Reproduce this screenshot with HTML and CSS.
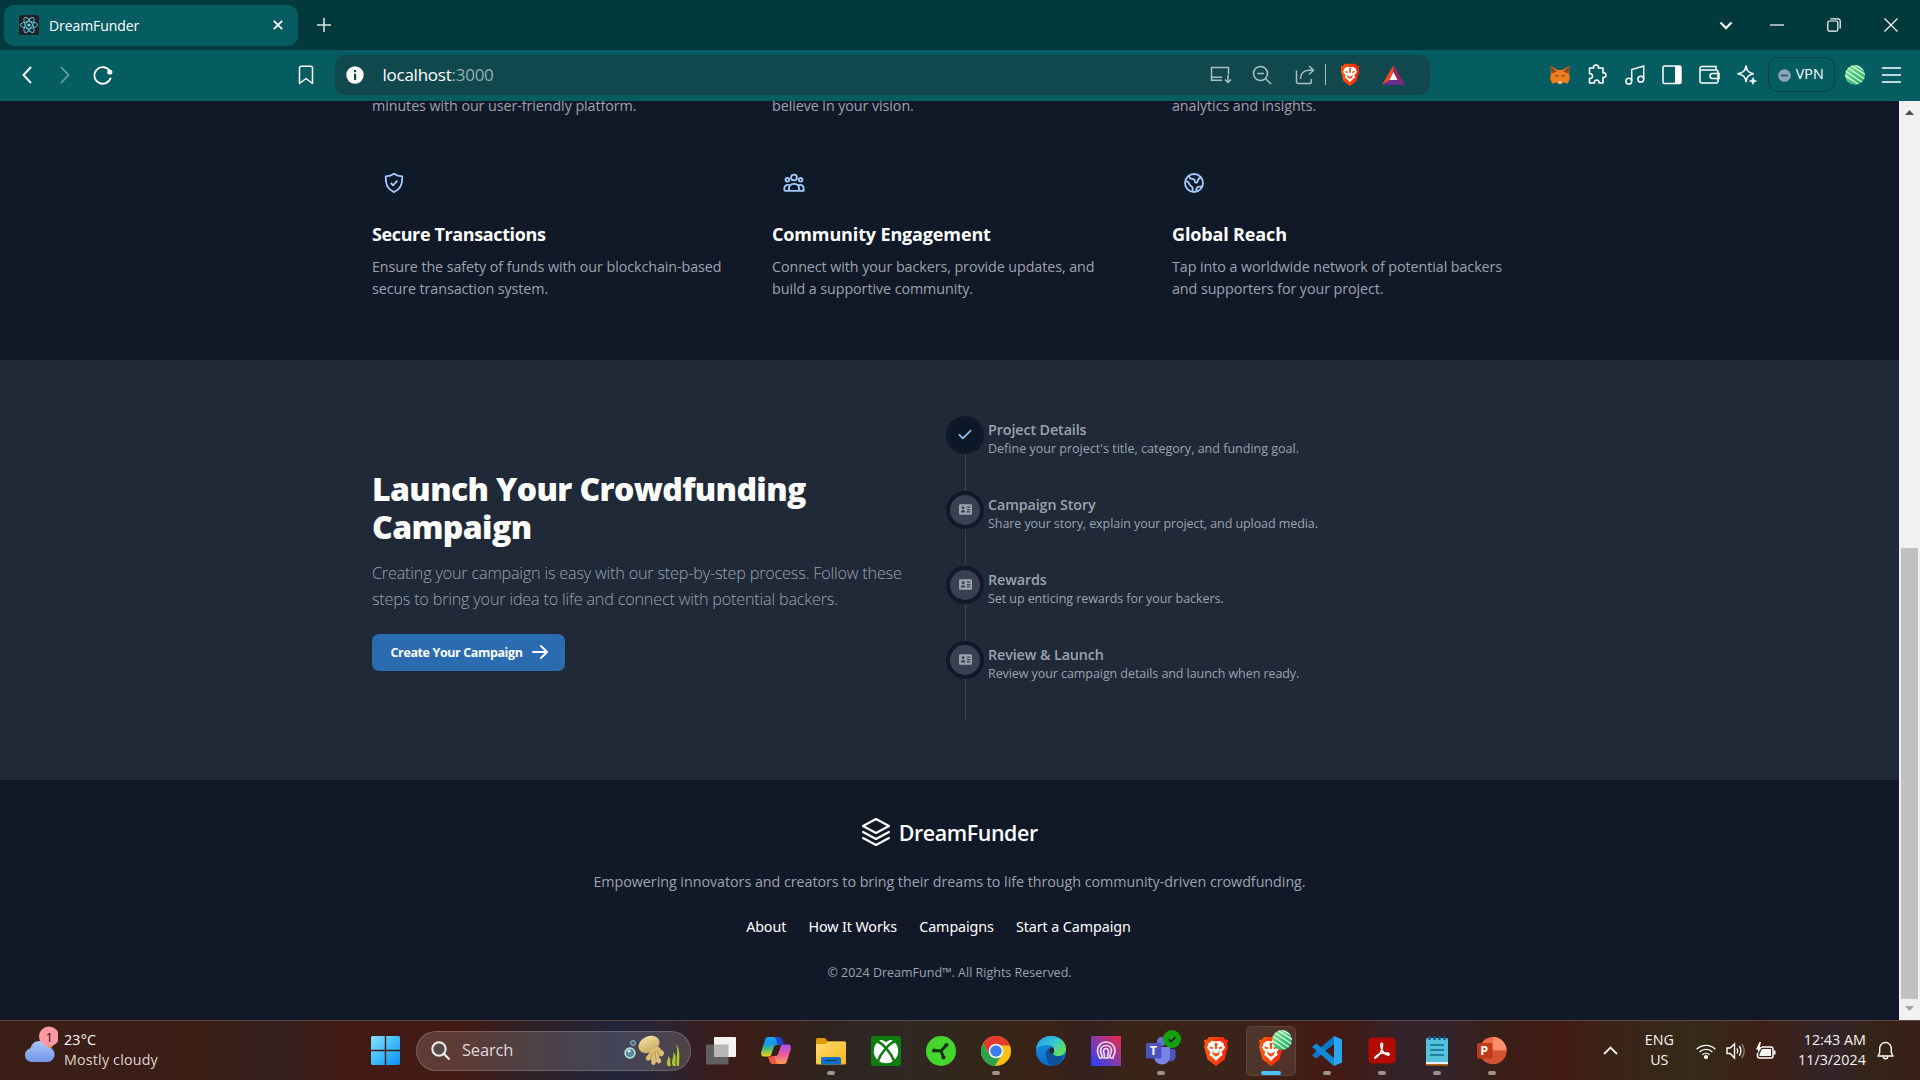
FILE: index.html
```
<!DOCTYPE html>
<html lang="en">
<head>
<meta charset="utf-8">
<title>DreamFunder</title>
<link rel="stylesheet" href="styles.css">
</head>
<body>
<svg width="0" height="0" class="defs" aria-hidden="true">
  <defs>
    <linearGradient id="win" x1="0" y1="0" x2="1" y2="1"><stop offset="0" stop-color="#8be0fb"/><stop offset=".5" stop-color="#3fbdf8"/><stop offset="1" stop-color="#0a90f5"/></linearGradient>
    <linearGradient id="brave" x1="0" y1="0" x2="1" y2="0"><stop offset="0" stop-color="#ff5a0a"/><stop offset="1" stop-color="#ff2108"/></linearGradient>
    <linearGradient id="cop1" x1="0" y1="0" x2="0" y2="1"><stop offset="0" stop-color="#18a8f0"/><stop offset=".35" stop-color="#1496e8"/><stop offset=".65" stop-color="#5cc06a"/><stop offset="1" stop-color="#f7cf1a"/></linearGradient>
    <linearGradient id="cop2" x1="0" y1="0" x2="0" y2="1"><stop offset="0" stop-color="#a64ff0"/><stop offset=".5" stop-color="#ee5aa0"/><stop offset="1" stop-color="#ffa04a"/></linearGradient>
    <linearGradient id="edge1" x1="0" y1="0" x2="1" y2=".6"><stop offset="0" stop-color="#1f9ce0"/><stop offset=".55" stop-color="#35c2dc"/><stop offset="1" stop-color="#62e25a"/></linearGradient>
    <linearGradient id="edge2" x1="0" y1="0" x2="0" y2="1"><stop offset="0" stop-color="#1b96e0"/><stop offset="1" stop-color="#0b6cc8"/></linearGradient>
    <linearGradient id="fold" x1="0" y1="0" x2="1" y2="1"><stop offset="0" stop-color="#ffda6e"/><stop offset="1" stop-color="#fbb91c"/></linearGradient>
    <linearGradient id="brain" x1="0" y1="1" x2="1" y2="0"><stop offset="0" stop-color="#2340ff"/><stop offset=".5" stop-color="#8a3aa8"/><stop offset="1" stop-color="#f02448"/></linearGradient>
    <linearGradient id="cloud" x1="0" y1="0" x2="0" y2="1"><stop offset="0" stop-color="#a8c4f8"/><stop offset="1" stop-color="#7398ea"/></linearGradient>
    <linearGradient id="avatar" x1="0" y1="0" x2="1" y2="1"><stop offset="0" stop-color="#a5e89a"/><stop offset=".5" stop-color="#3fc87a"/><stop offset="1" stop-color="#18a85c"/></linearGradient>
    <linearGradient id="jelly" x1="0" y1="0" x2="0" y2="1"><stop offset="0" stop-color="#efdf9c"/><stop offset="1" stop-color="#c9a860"/></linearGradient>
    <clipPath id="round"><circle cx="10" cy="10" r="10"/></clipPath>
    <symbol id="lion" viewBox="0 0 26 30">
      <path d="M6 1h14l2 2.500 3 .5-.8 4 .8 2.500-3.500 13L13 30 4.500 23.500 1 10.500 1.800 8 1 4l3-.5z" fill="url(#brave)"/>
      <path d="M13 5.500l4-.7 4 3-.3 1.500 1.500 2.200-3.400 4.500.9 3-3.200 2.200-3.500 4-3.500-4-3.200-2.200.9-3-3.400-4.500 1.500-2.200L5 7.800l4-3z" fill="#fff"/>
      <path d="M6.500 10.500l4 1-.5 1.500-3-.5zM19.500 10.500l-4 1 .5 1.500 3-.5zM9 15l3 2.500h2l3-2.500-1.200 4-2.800 1.800-2.800-1.800zM11.500 7h3l-.7 6h-1.600z" fill="#ff4a0c"/>
    </symbol>
    <symbol id="orb" viewBox="0 0 20 20">
      <g clip-path="url(#round)"><rect width="20" height="20" fill="url(#avatar)"/><path d="M4 -1L24 12M1 1.500L22 15.500M-1 5L19 18.500M-2 9L15 20.500M9 -1L24 8" stroke="#e6fbe6" stroke-width="1.300"/></g>
    </symbol>
    <symbol id="idcard" viewBox="0 0 20 20"><path fill-rule="evenodd" d="M2 2h16a2 2 0 0 1 2 2v12a2 2 0 0 1-2 2H2a2 2 0 0 1-2-2V4a2 2 0 0 1 2-2zM6.300 5a2.300 2.300 0 1 0 0 4.600 2.300 2.300 0 0 0 0-4.600zM2.800 14.500h7c0-2.300-1.400-3.700-3.500-3.700s-3.500 1.400-3.500 3.700zM12 5.500v1.800h5.500V5.500zm0 3.700V11h5.500V9.200zm0 3.500v1.800h5.500v-1.800z"/></symbol>
  </defs>
</svg>

<header class="tabstrip">
  <div class="tab">
    <svg class="favicon" viewBox="0 0 20 20"><rect width="20" height="20" rx="2" fill="#222"/><g fill="none" stroke="#58c4dc" stroke-width="1"><ellipse cx="10" cy="10" rx="8.500" ry="3.300"/><ellipse cx="10" cy="10" rx="8.500" ry="3.300" transform="rotate(60 10 10)"/><ellipse cx="10" cy="10" rx="8.500" ry="3.300" transform="rotate(120 10 10)"/></g><circle cx="10" cy="10" r="1.600" fill="#7fe0f5"/></svg>
    <span class="tab-title">DreamFunder</span>
    <svg class="tab-close" viewBox="0 0 10 10"><path d="M.8.800l8.400 8.400M9.200.800L.8 9.200" stroke="#fff" stroke-width="1.800"/></svg>
  </div>
  <svg class="new-tab" viewBox="0 0 14 14"><path d="M7 0v14M0 7h14" stroke="#d8e2e2" stroke-width="1.600"/></svg>
  <div class="window-controls">
    <svg width="14" height="14" viewBox="0 0 14 14"><path d="M1.500 4.500l5.500 5.500 5.500-5.500" fill="none" stroke="#fff" stroke-width="2.300"/></svg>
    <svg width="14" height="14" viewBox="0 0 14 14"><path d="M0 7h14" stroke="#fff" stroke-width="1.200"/></svg>
    <svg width="14" height="14" viewBox="0 0 14 14"><rect x=".8" y="3" width="10" height="10.200" rx="1.800" fill="none" stroke="#fff" stroke-width="1.200"/><path d="M3.500.900h7.300a2.400 2.400 0 0 1 2.400 2.400v7.300" fill="none" stroke="#fff" stroke-width="1.200"/></svg>
    <svg width="14" height="14" viewBox="0 0 14 14"><path d="M.5.500l13 13M13.500.500l-13 13" stroke="#fff" stroke-width="1.200"/></svg>
  </div>
</header>

<div class="toolbar">
  <div class="nav-buttons">
    <svg width="10" height="18" viewBox="0 0 10 18"><path d="M9 1L1.500 9 9 17" fill="none" stroke="#fff" stroke-width="1.900"/></svg>
    <svg width="10" height="18" viewBox="0 0 10 18"><path d="M1 1l7.500 8L1 17" fill="none" stroke="#6fa0a3" stroke-width="1.700"/></svg>
    <svg width="20" height="20" viewBox="0 0 20 20"><path d="M16.500 5.600A8.300 8.300 0 1 0 17.700 12.700" fill="none" stroke="#fff" stroke-width="1.800"/><circle cx="16.800" cy="7" r="2.600" fill="#fff"/></svg>
  </div>
  <svg class="bookmark" viewBox="0 0 16 20"><path d="M1.500 18.500V3a1.800 1.800 0 0 1 1.800-1.800h9.400A1.800 1.800 0 0 1 14.500 3v15.500L8 13.500z" fill="none" stroke="#fff" stroke-width="1.500" stroke-linejoin="round"/></svg>
  <div class="address">
    <svg class="info" viewBox="0 0 18 18"><circle cx="9" cy="9" r="8.700" fill="#fff"/><path d="M8 7.700h2.200V14H8zM8 4h2.200v2.200H8z" fill="#10484e"/></svg>
    <span class="url">localhost<span class="port">:3000</span></span>
    <div class="address-actions">
      <svg width="22" height="20" viewBox="0 0 22 20" fill="none" stroke="#a9bfc1" stroke-width="1.500"><path d="M12 15.300H1.500V2.500h17v7M1.500 12.300H12M18 10v7M15 14.500l3 3 3-3"/></svg>
      <svg width="20" height="20" viewBox="0 0 20 20" fill="none" stroke="#a9bfc1" stroke-width="1.600"><circle cx="8.500" cy="8.500" r="7"/><path d="M13.700 13.700L19 19M5 8.500h7"/></svg>
      <svg class="share" width="20" height="20" viewBox="0 0 20 20" fill="none" stroke="#a9bfc1" stroke-width="1.500"><path d="M1.500 5.500v11.200a1.800 1.800 0 0 0 1.800 1.800h11.200a1.800 1.800 0 0 0 1.800-1.800V14M5.500 14c0-5.500 3.500-8.800 8-8.800H18M14 1l4.500 4.200L14 9.500"/></svg>
      <i class="divider"></i>
      <svg width="20" height="23"><use href="#lion"/></svg>
      <svg width="23" height="20" viewBox="0 0 23 20"><path d="M11.500 0L0 20l8-5 3.500-8z" fill="#ff4724"/><path d="M11.500 0L23 20l-8-5-3.500-8z" fill="#9e1f63"/><path d="M0 20h23l-8-5H8z" fill="#662d91"/><path d="M11.500 7L7.500 15h8z" fill="#fff"/></svg>
    </div>
  </div>
  <div class="extensions">
    <svg width="20" height="20" viewBox="0 0 20 20"><path d="M.5.800L8 5h4L19.500.800 19 8l.8 6-2 4.500-4.300-1-2 1.500h-3l-2-1.500-4.300 1L.2 14 1 8z" fill="#f07f1b"/><path d="M.5.800L7 6.500 1.500 8.500zM19.500.800L13 6.500l5.500 2z" fill="#8e4a1c"/><path d="M8 16h4l-.8 2.800H8.800z" fill="#d5c8be"/><path d="M5 10l3 .5-.5 1.500zM15 10l-3 .5.5 1.500z" fill="#23344a"/></svg>
    <svg width="20" height="21" viewBox="0 0 20 21" fill="none" stroke="#fff" stroke-width="1.600" stroke-linejoin="round"><path d="M2.500 4h4.200C6 1.500 7.800 1 9 1s3 .5 2.300 3H16v5c2.500-.6 3 1 3 2.200s-.8 2.700-3 2.200V19h-4c.4-2-.8-3-2.200-3s-2.700 1-2.300 3h-5v-4.500c2.500.3 3-1.300 3-2.500S4.500 9.200 2.500 9.600z"/></svg>
    <svg width="20" height="20" viewBox="0 0 20 20" fill="none" stroke="#fff" stroke-width="1.500"><circle cx="3.800" cy="16.200" r="2.900"/><circle cx="15.800" cy="14.200" r="2.900"/><path d="M6.700 16V4.500L18.700 1v13"/></svg>
    <svg width="20" height="20" viewBox="0 0 20 20"><rect x="1" y="1" width="18" height="17.500" rx="1.500" fill="none" stroke="#fff" stroke-width="1.500"/><path d="M13 1h5a1 1 0 0 1 1 1v15.500a1 1 0 0 1-1 1h-5z" fill="#fff"/></svg>
    <svg width="21" height="20" viewBox="0 0 21 20" fill="none" stroke="#fff" stroke-width="1.500"><path d="M17 5V1.500H3A2 2 0 0 0 1 3.500V16a2 2 0 0 0 2 2h14a2 2 0 0 0 2-2V7a2 2 0 0 0-2-2H1.500M20 8.500h-6.500a2.500 2.500 0 0 0 0 5H20z"/></svg>
    <svg width="20" height="20" viewBox="0 0 20 20"><path d="M9 1c.9 5 2.400 6.600 7.300 7.800C11.400 10 9.900 11.700 9 16.500 8.100 11.700 6.600 10 1 8.800 6.600 7.600 8.100 6 9 1z" fill="none" stroke="#fff" stroke-width="1.500" stroke-linejoin="round"/><path d="M16 12.500l1 2.500 2.500 1-2.500 1-1 2.500-1-2.500-2.500-1 2.500-1z" fill="#fff" stroke="#fff" stroke-width=".6"/></svg>
    <div class="vpn"><svg width="13" height="13" viewBox="0 0 13 13"><circle cx="6.500" cy="6.500" r="6.300" fill="#8fa3bb"/><path d="M3 6.500h7" stroke="#055c61" stroke-width="1.500"/></svg>VPN</div>
    <svg width="20" height="20"><use href="#orb"/></svg>
    <svg width="19" height="16" viewBox="0 0 19 16"><path d="M0 1h19M0 8h19M0 15h19" stroke="#fff" stroke-width="1.400"/></svg>
  </div>
</div>

<div class="viewport">
  <main class="page">
    <section class="features">
      <div class="features-grid">
        <p>minutes with our user-friendly platform.</p>
        <p>believe in your vision.</p>
        <p>analytics and insights.</p>
        <article>
          <div class="feature-icon"><svg viewBox="0 0 24 24"><path d="M12 2c2.500 1.900 5.300 2.700 9 2.800C21.500 12.500 19 19 12 22 5 19 2.500 12.500 3 4.800 6.700 4.700 9.500 3.900 12 2z"/><path d="M8.500 12l2.500 2.500 4.700-5"/></svg></div>
          <h3 class="tight">Secure Transactions</h3>
          <p>Ensure the safety of funds with our blockchain-based<br>secure transaction system.</p>
        </article>
        <article>
          <div class="feature-icon"><svg viewBox="0 0 24 24"><circle cx="12" cy="6" r="3.200"/><circle cx="4.800" cy="8.500" r="2"/><circle cx="19.200" cy="8.500" r="2"/><path d="M6.500 20.500V18c0-3.200 2.300-5 5.500-5s5.500 1.800 5.500 5v2.500M1.500 20.500h21V18c0-2.600-1.600-4-4-4-.8 0-1.500.2-2.200.6M1.500 20.500V18c0-2.600 1.600-4 4-4 .8 0 1.500.2 2.200.6"/></svg></div>
          <h3>Community Engagement</h3>
          <p>Connect with your backers, provide updates, and<br>build a supportive community.</p>
        </article>
        <article>
          <div class="feature-icon"><svg viewBox="0 0 24 24"><circle cx="12" cy="12" r="9.800"/><path d="M6.500 3.800c.2 2.600 1.500 3.700 3.700 3.700 1.800 0 2.600 1 2.800 2.800.2 2 2.800 1.700 3-.3.300-2.500 1.500-3.800 4.200-4M2.500 10c3 .2 4.200 1.500 4.500 3.500.3 1.800 3.500 1.500 3.500 4.200V21.500M14.500 21.500c-.3-3.500.7-5.500 3.300-5.500h3"/></svg></div>
          <h3>Global Reach</h3>
          <p>Tap into a worldwide network of potential backers<br>and supporters for your project.</p>
        </article>
      </div>
    </section>

    <section class="launch">
      <div class="launch-grid">
        <div class="launch-copy">
          <h2>Launch Your Crowdfunding<br>Campaign</h2>
          <p>Creating your campaign is easy with our step-by-step process. Follow these<br>steps to bring your idea to life and connect with potential backers.</p>
          <a class="button"><span>Create Your Campaign</span><svg viewBox="0 0 16 14"><path d="M1 7h14M9 1l6 6-6 6" fill="none" stroke="#fff" stroke-width="1.900" stroke-linecap="round" stroke-linejoin="round"/></svg></a>
        </div>
        <ol class="steps">
          <li><span class="dot done"><svg viewBox="0 0 16 12"><path d="M1.500 6.500l4 4L14.500 1.500" fill="none" stroke="#90c0f4" stroke-width="1.900" stroke-linecap="round" stroke-linejoin="round"/></svg></span><div><h4>Project Details</h4><p class="wide">Define your project's title, category, and funding goal.</p></div></li>
          <li><span class="dot"><svg viewBox="0 0 20 20"><use href="#idcard"/></svg></span><div><h4>Campaign Story</h4><p>Share your story, explain your project, and upload media.</p></div></li>
          <li><span class="dot"><svg viewBox="0 0 20 20"><use href="#idcard"/></svg></span><div><h4>Rewards</h4><p>Set up enticing rewards for your backers.</p></div></li>
          <li><span class="dot"><svg viewBox="0 0 20 20"><use href="#idcard"/></svg></span><div><h4>Review &amp; Launch</h4><p>Review your campaign details and launch when ready.</p></div></li>
        </ol>
      </div>
    </section>

    <footer class="footer">
      <div class="brand"><svg viewBox="0 0 30 30" fill="none" stroke="#fff" stroke-width="2.100" stroke-linejoin="round" stroke-linecap="round"><path d="M15 2l13 7-13 7L2 9z"/><path d="M2 15l13 7 13-7"/><path d="M2 21l13 7 13-7"/></svg>DreamFunder</div>
      <p class="tagline">Empowering innovators and creators to bring their dreams to life through community-driven crowdfunding.</p>
      <nav><a>About</a><a>How It Works</a><a>Campaigns</a><a>Start a Campaign</a></nav>
      <p class="copyright">© 2024 DreamFund™. All Rights Reserved.</p>
    </footer>
  </main>
  <div class="scrollbar">
    <svg viewBox="0 0 9 5"><path d="M0 5L4.500 0 9 5z" fill="#505050"/></svg>
    <div class="track"><div class="thumb"></div></div>
    <svg viewBox="0 0 9 5"><path d="M0 0l4.500 5L9 0z" fill="#a3a3a3"/></svg>
  </div>
</div>

<div class="taskbar">
  <div class="weather">
    <svg width="34" height="38" viewBox="0 0 34 38"><circle cx="23" cy="18" r="6" fill="#f58220"/><path d="M7 36a7 7 0 0 1-.5-13.800A9.500 9.500 0 0 1 24.500 21a7.600 7.600 0 0 1-.5 15z" fill="url(#cloud)"/><circle cx="25" cy="10.500" r="10" fill="#ff9aa5"/></svg>
    <span class="badge">1</span>
    <div><div>23°C</div><div class="dim">Mostly cloudy</div></div>
  </div>
  <svg class="start" viewBox="0 0 29 29" fill="url(#win)"><path d="M1 0h12.800v13.800H0V1zM15.200 0H28l1 1v12.800H15.200zM0 15.200h13.800V29H1l-1-1zM15.200 15.200H29V28l-1 1H15.200z"/></svg>
  <div class="search">
    <svg class="glass" viewBox="0 0 19 19"><circle cx="8" cy="8" r="6.700" fill="#5a4a4a" stroke="#eee" stroke-width="2"/><path d="M12.800 12.800l5 5" stroke="#eee" stroke-width="2.300" stroke-linecap="round"/></svg>
    <span>Search</span>
    <svg class="art" viewBox="0 0 56 32"><circle cx="6" cy="18" r="5" fill="#5c8a92" stroke="#bde8ea" stroke-width="1.400"/><circle cx="5" cy="16" r="1.600" fill="#f6d8f0"/><circle cx="9" cy="8" r="2.400" fill="#40606a" stroke="#a0d0d4"/><ellipse cx="25" cy="9.500" rx="11" ry="8" transform="rotate(-25 25 9.500)" fill="url(#jelly)"/><path d="M27 15c-1 4-6 6-5 9 1 2 4 2 5 0 1 3-1 5 2 6 2 .5 3-2 3-4 1 3 4 3 5 1 1-3-2-3-2-6 2 1 5 0 5-3s-3-2-4-5l-3-2z" fill="#dcc078"/><path d="M29 17l-3 8M31 16l1 9M33 15l3 6" stroke="#b08c48" stroke-width=".9"/><path d="M44 31c-3-4 1-6 0-10 4 3 1 6 3 10zM49 31c-3-5 2-9 0-14 5 4 1 9 3 14zM53 31c-2-7 2-14-1-22 5 6 3 15 3 22z" fill="#a8cc2c"/></svg>
  </div>
  <div class="apps">
    <div class="app"><svg viewBox="0 0 30 30"><rect x="0" y="8.500" width="22.500" height="20" rx="1" fill="#606060"/><rect x="8" y="1" width="22" height="20" rx="1" fill="#f3f3f3"/><path d="M8 8.500h14.500V21H8z" fill="#b6b6b6"/></svg></div>
    <div class="app"><svg viewBox="0 0 30 30"><path d="M7 1h10c3 0 3.500 3 3 5l-1 3h-3c-2 0-3 1-3.500 3l-2 6c-.6 2-1.500 2.500-3.500 2.500H2.500C0 20.500-.3 18 .5 15L4 4c.6-2 1.500-3 3-3z" fill="url(#cop1)"/><path d="M13 1h5c2 0 3 1 3.500 3l1.500 4.500h-7C16 5 15 2 13 1z" fill="#1f45d0"/><path d="M23 28H13c-3 0-3.500-3-3-5l1-3h3c2 0 3-1 3.500-3l2-6c.6-2 1.500-2.500 3.500-2.500h4.500c2.500 0 2.800 2.500 2 5.500L26 25c-.6 2-1.500 3-3 3z" fill="url(#cop2)"/><path d="M17 28h-5c-2 0-3-1-3.500-3L7 20.500h7c0 3.500 1 6.500 3 7.500z" fill="#f0563c"/></svg></div>
    <div class="app run"><svg viewBox="0 0 30 30"><path d="M0 3.500A1.500 1.500 0 0 1 1.500 2H9l3 3.500h16.500A1.500 1.500 0 0 1 30 7v4H0z" fill="#dc9a08"/><path d="M0 8h9.500L12 5.500h16.500A1.500 1.500 0 0 1 30 7v20a1.500 1.500 0 0 1-1.500 1.500h-27A1.500 1.500 0 0 1 0 27z" fill="url(#fold)"/><path d="M5 28.500V23a2 2 0 0 1 2-2h16a2 2 0 0 1 2 2v5.500z" fill="#0f72c8"/><path d="M9 24.500h12" stroke="#0b3f78" stroke-width="1.200"/></svg></div>
    <div class="app"><svg viewBox="0 0 30 30"><rect width="30" height="30" rx="2.500" fill="#107c10"/><circle cx="15" cy="15" r="12.200" fill="#fff"/><path d="M8 3.500C11 3.500 13.500 5 15 6.200 16.500 5 19 3.500 22 3.500L20 1H10z" fill="#107c10"/><path d="M6 5.500C11 6.500 20.500 17 23.500 26M24 5.500C19 6.500 9.500 17 6.500 26" fill="none" stroke="#107c10" stroke-width="2.600"/></svg></div>
    <div class="app"><svg viewBox="0 0 30 30"><circle cx="15" cy="15" r="15" fill="#44d62c"/><path d="M15 15L20.500 9M15 15l-7-.5M15 15l2.500 6.500" stroke="#12310c" stroke-width="3"/><circle cx="20.500" cy="9" r="2" fill="#12310c"/><circle cx="8" cy="14.500" r="2" fill="#12310c"/><circle cx="17.500" cy="21.500" r="2" fill="#12310c"/></svg></div>
    <div class="app run"><svg viewBox="0 0 30 30"><circle cx="15" cy="15" r="15" fill="#fbc116"/><path d="M28.900 9.500A15 15 0 0 0 2 7.500l6.500 11.200L15 9.500z" fill="#e33b2e"/><path d="M2 7.500A15 15 0 0 0 14 30l6.500-11.200-12-.2z" fill="#2da14c"/><circle cx="15" cy="15" r="7.300" fill="#fff"/><circle cx="15" cy="15" r="5.800" fill="#3b7def"/></svg></div>
    <div class="app"><svg viewBox="0 0 30 30"><circle cx="15" cy="15" r="15" fill="url(#edge2)"/><path d="M0 13C1 5 7 0 15 0c8.500 0 15 6 15 12.500 0 5-4 7.500-8 7.500-3.500 0-5-1.300-5-2.200s1-1.500 1-3.800c0-3-3-5-7-5C6 9 1.500 11 0 13z" fill="url(#edge1)"/><path d="M10 18c0-4 2.500-6.500 6-7 1.300.700 2 1.800 2 3 0 2.300-1 2.900-1 3.800 0 .9 1.500 2.500 5 2.500 3 0 5-.8 6-1.500C26 25 21 30 15.500 29.500 12 28 10 23 10 18z" fill="#0d4f9c"/><path d="M16 11.500c1.500.5 2.300 1.500 2 3.500-.2 1.500-1 2-1 2.800-1.300.500-3.500-.8-3.500-3 0-1.500 1-3 2.500-3.300z" fill="#2d2622"/></svg></div>
    <div class="app"><svg viewBox="0 0 30 30"><rect width="30" height="30" fill="url(#brain)"/><g fill="none" stroke="#f4dcec" stroke-width="1.700"><path d="M11 22H8.500c0-2-2-3.500-2-7A8.500 8.500 0 0 1 15 6c5 0 9 3.500 9 8.500 0 4-2 5-2 7.500h-3M11 22c1-3-1.500-4-1.500-7.500A5.500 5.500 0 0 1 15 9.500c3.500 0 5.500 2.500 5.500 5S18 19 19 22M13 22c1-3 0-4-.5-6.500-.3-4 5.300-4 5 0C17 18 16 19 17 22z"/></g></svg></div>
    <div class="app run"><svg viewBox="0 0 30 30"><circle cx="15.500" cy="5.500" r="4.500" fill="#6a74d8"/><path d="M19 13h9a1.500 1.500 0 0 1 1.500 1.500V19a5 5 0 0 1-9 4z" fill="#4a55c0"/><path d="M8 11h16v9.500a8 8 0 0 1-16 0z" fill="#7b83eb"/><rect x="0" y="7" width="15.500" height="15.500" rx="1.500" fill="#4b53bc"/></svg><b class="glyph">T</b><svg class="status" viewBox="0 0 18 18"><circle cx="9" cy="9" r="9" fill="#13a10e"/><path d="M5.500 9l2.500 2.500L12.500 7" fill="none" stroke="#0a1f08" stroke-width="1.700"/></svg></div>
    <div class="app"><svg viewBox="0 0 26 30"><use href="#lion"/></svg></div>
    <div class="app active"><svg viewBox="0 0 26 30"><use href="#lion"/></svg><svg class="status orb"><use href="#orb"/></svg></div>
    <div class="app run"><svg viewBox="0 0 30 30"><path d="M22 0l8 3.500v23L22 30z" fill="#2ba4f2"/><path d="M22 0v8L4.500 22.500 2 21 0 19z" fill="#0a78c4"/><path d="M22 30v-8L4.500 7.500 2 9 0 11z" fill="#1188d8"/></svg></div>
    <div class="app run"><svg viewBox="0 0 30 30"><rect x="1.500" y="1.500" width="27" height="26" rx="4" fill="#b30b00"/><path d="M8 21.500c2-3 6.500-5 12-4.500 3 .3 3 2.300.8 2-4-.5-6.800-5.500-7-10-.1-2.500 2-2.500 1.800 0-.3 4-2.800 9.500-5.600 12-1.500 1.300-3 1.500-2 .5z" fill="none" stroke="#fff" stroke-width="1.500"/></svg></div>
    <div class="app run"><svg viewBox="0 0 30 30"><rect x="4" y="2" width="22" height="26" rx="1.500" fill="#55c2dc"/><path d="M4 26h22v2.500H4z" fill="#f2f2f2"/><path d="M4 28h22v1.600H4z" fill="#b06a1c"/><path d="M7.500 0v4M12.500 0v4M17.500 0v4M22.500 0v4" stroke="#0c5a80" stroke-width="2.200"/><path d="M8 9h14M8 14h14M8 19h14" stroke="#11688c" stroke-width="1.600"/></svg></div>
    <div class="app run"><svg viewBox="0 0 30 30"><circle cx="16" cy="14.500" r="13.500" fill="#ed6c47"/><path d="M16 1a13.500 13.500 0 0 1 13.500 13.500H16z" fill="#ff8f6b"/><path d="M2.500 14.500h27a13.500 13.500 0 0 1-27 0z" fill="#d35230"/><rect x="0" y="7" width="15.500" height="15.500" rx="1.500" fill="#c13b1b"/></svg><b class="glyph">P</b></div>
  </div>
  <div class="tray">
    <svg width="15" height="9" viewBox="0 0 15 9"><path d="M1 8l6.500-6.500L14 8" fill="none" stroke="#f2eeee" stroke-width="1.900"/></svg>
    <div class="lang">ENG<br>US</div>
    <div class="status-icons">
      <svg width="20" height="16" viewBox="0 0 20 16" fill="none" stroke="#fff" stroke-width="1.400"><path d="M.7 6.200a13.200 13.200 0 0 1 18.600 0M3.600 9a9.200 9.200 0 0 1 12.800 0M6.400 11.800a5.300 5.300 0 0 1 7.200 0"/><circle cx="10" cy="14" r="1.400" fill="#fff"/></svg>
      <svg width="20" height="18" viewBox="0 0 20 18" fill="none" stroke="#fff" stroke-width="1.400"><path d="M1 6v5.500h3.200L8.500 16V1.800L4.200 6zM11 6.300q1.600 2.600 0 5.200M13.300 4q3.200 4.800 0 9.800"/><path d="M15.800 1.800q4.800 7 0 14.200" stroke="#8a7a74"/></svg>
      <svg width="20" height="18" viewBox="0 0 20 18"><path d="M5.500 5H15a2 2 0 0 1 2 2v7a2 2 0 0 1-2 2H3.500a2 2 0 0 1-2-2v-3" fill="none" stroke="#fff" stroke-width="1.500"/><path d="M6 7h9v7H3.500v-2z" fill="#fff"/><path d="M17.500 8.500h2v4h-2zM3.500 0L0 7.500h2.200L1.500 12 6 5H3.800L5 0z" fill="#fff"/></svg>
    </div>
    <div class="clock"><div>12:43 AM</div><div>11/3/2024</div></div>
    <svg width="17" height="19" viewBox="0 0 17 19"><path d="M1 15h15l-1.700-3.500V7.300a5.800 5.800 0 0 0-11.600 0v4.200z" fill="none" stroke="#fff" stroke-width="1.400" stroke-linejoin="round"/><path d="M6.300 15.500a2.200 2.200 0 0 0 4.400 0" fill="none" stroke="#fff" stroke-width="1.400"/></svg>
  </div>
</div>
</body>
</html>
```
FILE: styles.css
```
* { box-sizing: border-box; margin: 0; padding: 0; }
html, body { width: 1920px; height: 1080px; overflow: hidden; }
body { display: flex; flex-direction: column; font: 400 14.3px/1 "Open Sans", "Noto Sans", sans-serif; color: #fff; background: #111827; }
svg { display: block; flex: none; }
.defs { position: absolute; }

/* Browser chrome */
.tabstrip { height: 50px; background: #02393d; display: flex; align-items: center; padding-left: 4px; flex: none; }
.tab { width: 294px; height: 41px; border-radius: 10px; background: #055c61; display: flex; align-items: center; padding: 0 15px; }
.favicon { width: 20px; height: 20px; }
.tab-title { margin-left: 10px; padding-top: 1px; font-size: 14px; letter-spacing: -.09px; }
.tab-close { width: 10px; height: 10px; margin-left: auto; }
.new-tab { width: 14px; height: 14px; margin-left: 19px; }
.window-controls { margin-left: auto; display: flex; gap: 43px; padding-right: 22px; }
.window-controls svg:first-child { margin-right: -6px; }

.toolbar { height: 51px; background: #055c61; display: flex; align-items: center; flex: none; padding: 0 0 2px 22px; }
.nav-buttons { display: flex; align-items: center; gap: 28px; width: 276px; }
.nav-buttons svg:last-child { margin-left: -5px; }
.bookmark { width: 16px; height: 20px; }
.address { width: 1095px; height: 40px; margin-left: 21px; border-radius: 10px; background: #10484e; display: flex; align-items: center; padding-left: 11px; }
.info { width: 18px; height: 18px; }
.url { margin-left: 18.5px; padding-bottom: 1px; font-size: 17px; letter-spacing: -.25px; }
.port { color: #97b1b3; }
.address-actions { margin-left: auto; display: flex; align-items: center; width: 220px; gap: 20px; }
.address-actions .share { margin-left: 3px; }
.address-actions .divider { width: 1px; height: 21px; background: #a9bfc1; margin: 0 -6px 0 -10px; }
.address-actions svg:last-child { margin-left: 2px; }
.extensions { margin-left: 120px; display: flex; align-items: center; gap: 17.3px; }
.vpn { width: 67px; height: 35px; margin: 0 -7px; border: 1px solid #034448; border-radius: 10px; display: flex; align-items: center; gap: 5px; padding-left: 9px; }
.vpn svg { margin-bottom: -1px; }

/* Page */
.viewport { height: 919px; flex: none; display: flex; overflow: hidden; }
.page { width: 1899px; }
.features { height: 258.8px; overflow: hidden; }
.features-grid { width: 1155px; margin: -6.5px auto 0; display: grid; grid-template-columns: repeat(3, 355px); gap: 43px 45px; }
.features p { color: #9ca3af; line-height: 22.5px; letter-spacing: -.07px; white-space: nowrap; }
.feature-icon { width: 44px; height: 45px; border-radius: 50%; background: #0f1a29; display: flex; align-items: center; justify-content: center; margin-bottom: 16px; }
.feature-icon svg { width: 22px; height: 22px; fill: none; stroke: #a4cafe; stroke-width: 2; stroke-linejoin: round; }
.features h3 { font-size: 18px; font-weight: 700; line-height: 26.25px; letter-spacing: -.14px; margin-bottom: 8.5px; }
.features h3.tight { letter-spacing: -.38px; }

.launch { height: 420px; background: #1f2937; padding-top: 60px; }
.launch-grid { width: 1155px; margin: 0 auto; display: flex; }
.launch-copy { width: 578px; height: 300px; padding-top: 1.5px; display: flex; flex-direction: column; justify-content: center; align-items: flex-start; }
.launch h2 { font-size: 32px; font-weight: 800; line-height: 37.5px; letter-spacing: -.62px; margin-bottom: 15px; white-space: nowrap; }
.launch-copy p { font-size: 16.2px; font-weight: 300; line-height: 26.25px; letter-spacing: -.183px; color: #9ca3af; margin-bottom: 21px; white-space: nowrap; }
.button { width: 193px; height: 37.5px; border-radius: 7px; background: #2b6cb0; padding: 0 17px 0 18.5px; display: flex; align-items: center; justify-content: space-between; font-size: 12.5px; font-weight: 700; letter-spacing: -.38px; }
.button span { padding-top: 2px; }
.button svg { width: 16px; height: 14px; }
.steps { list-style: none; height: 300px; background: linear-gradient(#374151, #374151) 15px 0 / 1px 100% no-repeat; color: #9ca3af; }
.steps li { height: 75px; display: flex; align-items: flex-start; gap: 8px; }
.steps li > div { padding-top: 1px; }
.dot { width: 30px; height: 30px; border-radius: 50%; background: #374151; box-shadow: 0 0 0 4px #111827; display: flex; align-items: center; justify-content: center; }
.dot svg { width: 13px; height: 13px; fill: #9ca3af; }
.dot.done { background: #0c1828; }
.dot.done svg { width: 14px; height: 11px; fill: none; }
.steps h4 { font-size: 14.3px; font-weight: 600; line-height: 18px; letter-spacing: -.1px; }
.steps p { font-size: 12.5px; line-height: 19px; letter-spacing: -.07px; }
.steps p.wide { letter-spacing: .008px; }

.footer { height: 240px; display: flex; flex-direction: column; align-items: center; padding-top: 37.5px; }
.brand { height: 30px; display: flex; align-items: center; gap: 7.5px; font-size: 21.4px; font-weight: 600; letter-spacing: -.41px; margin-bottom: 23.5px; }
.brand svg { width: 30px; height: 30px; }
.tagline { line-height: 22.5px; color: #9ca3af; letter-spacing: -.035px; margin-bottom: 22.5px; }
.footer nav { display: flex; font-family: "Noto Sans", sans-serif; line-height: 22.5px; letter-spacing: -.09px; }
.footer nav a { margin-right: 22.2px; }
.copyright { margin-top: 26px; font-size: 12.5px; line-height: 18.75px; color: #9ca3af; }

.scrollbar { width: 21px; background: #f1f1f1; display: flex; flex-direction: column; align-items: center; padding: 9px 0 9px; }
.scrollbar svg { width: 9px; height: 5px; }
.track { flex: 1; width: 17px; padding-top: 433px; }
.thumb { height: 451px; background: #c1c1c1; }

/* Taskbar */
.taskbar { height: 60px; flex: none; display: flex; align-items: center; border-top: 1px solid #5b4a45;
  background: linear-gradient(90deg, #3b1e16 0, #3b1e14 200px, #34201f 280px, #421a14 340px, #431913 460px, #2e2126 530px, #23243a 620px, #2c2430 665px, #3a1c1a 720px, #391e18 760px, #2d2622 850px, #2f2822 900px, #33261a 970px, #3c2216 1040px, #33211e 1090px, #3a2418 1130px, #3a2318 1230px, #451a14 1340px, #33232a 1400px, #33232a 1450px, #3a1f18 1500px, #451a14 1560px, #3a2418 1620px, #352a18 1700px, #3d2015 1760px, #33242a 1830px, #352418 1870px, #3a1f18 1920px); }
.weather { position: relative; width: 371px; display: flex; align-items: center; padding: 0 0 2px 24px; gap: 6px; line-height: 20px; letter-spacing: .18px; }
.weather > svg { margin-top: -9px; }
.badge { position: absolute; left: 45.5px; top: -3px; font-size: 13px; color: #2b1014; }
.dim { color: #dcd2cf; }
.start { width: 29px; height: 29px; }
.search { width: 275px; height: 40px; margin-left: 16px; border: 1px solid rgba(255, 255, 255, .18); border-radius: 20px; background: rgba(255, 255, 255, .15); display: flex; align-items: center; padding: 0 10px 0 14px; font-size: 16.5px; color: #dedada; letter-spacing: -.2px; }
.glass { width: 19px; height: 19px; margin-right: 12px; }
.art { width: 56px; height: 32px; margin-left: auto; }
.apps { display: flex; margin-left: 4.5px; gap: 5.1px; }
.app { position: relative; width: 50px; height: 50px; border-radius: 5px; display: flex; align-items: center; justify-content: center; }
.app > svg { width: 30px; height: 30px; }
.app.run::after { content: ""; position: absolute; bottom: 1px; left: 21px; width: 8px; height: 4px; border-radius: 2px; background: #9d9391; }
.app.active { background: rgba(255, 255, 255, .09); box-shadow: inset 0 0 0 1px rgba(255, 255, 255, .08); }
.app.active::after { content: ""; position: absolute; bottom: 1px; left: 15px; width: 20px; height: 4px; border-radius: 2px; background: #4cc2ff; }
.glyph { position: absolute; left: 13.5px; top: 18px; font-size: 12.5px; line-height: 14px; }
.app > .status { position: absolute; width: 18px; height: 18px; left: 27px; top: 4px; }
.app > .status.orb { width: 20px; height: 20px; left: 26px; top: 4px; }
.tray { flex: 1; display: flex; align-items: center; padding-left: 86.5px; line-height: 20px; color: #f6f2f2; }
.tray > div { margin-top: -2px; }
.lang { width: 45px; margin-left: 18.5px; text-align: center; line-height: 19.5px; }
.tray > .status-icons { display: flex; align-items: center; gap: 10px; margin: 0 0 0 14px; }
.clock { width: 90px; text-align: right; margin-right: 11px; }
```
